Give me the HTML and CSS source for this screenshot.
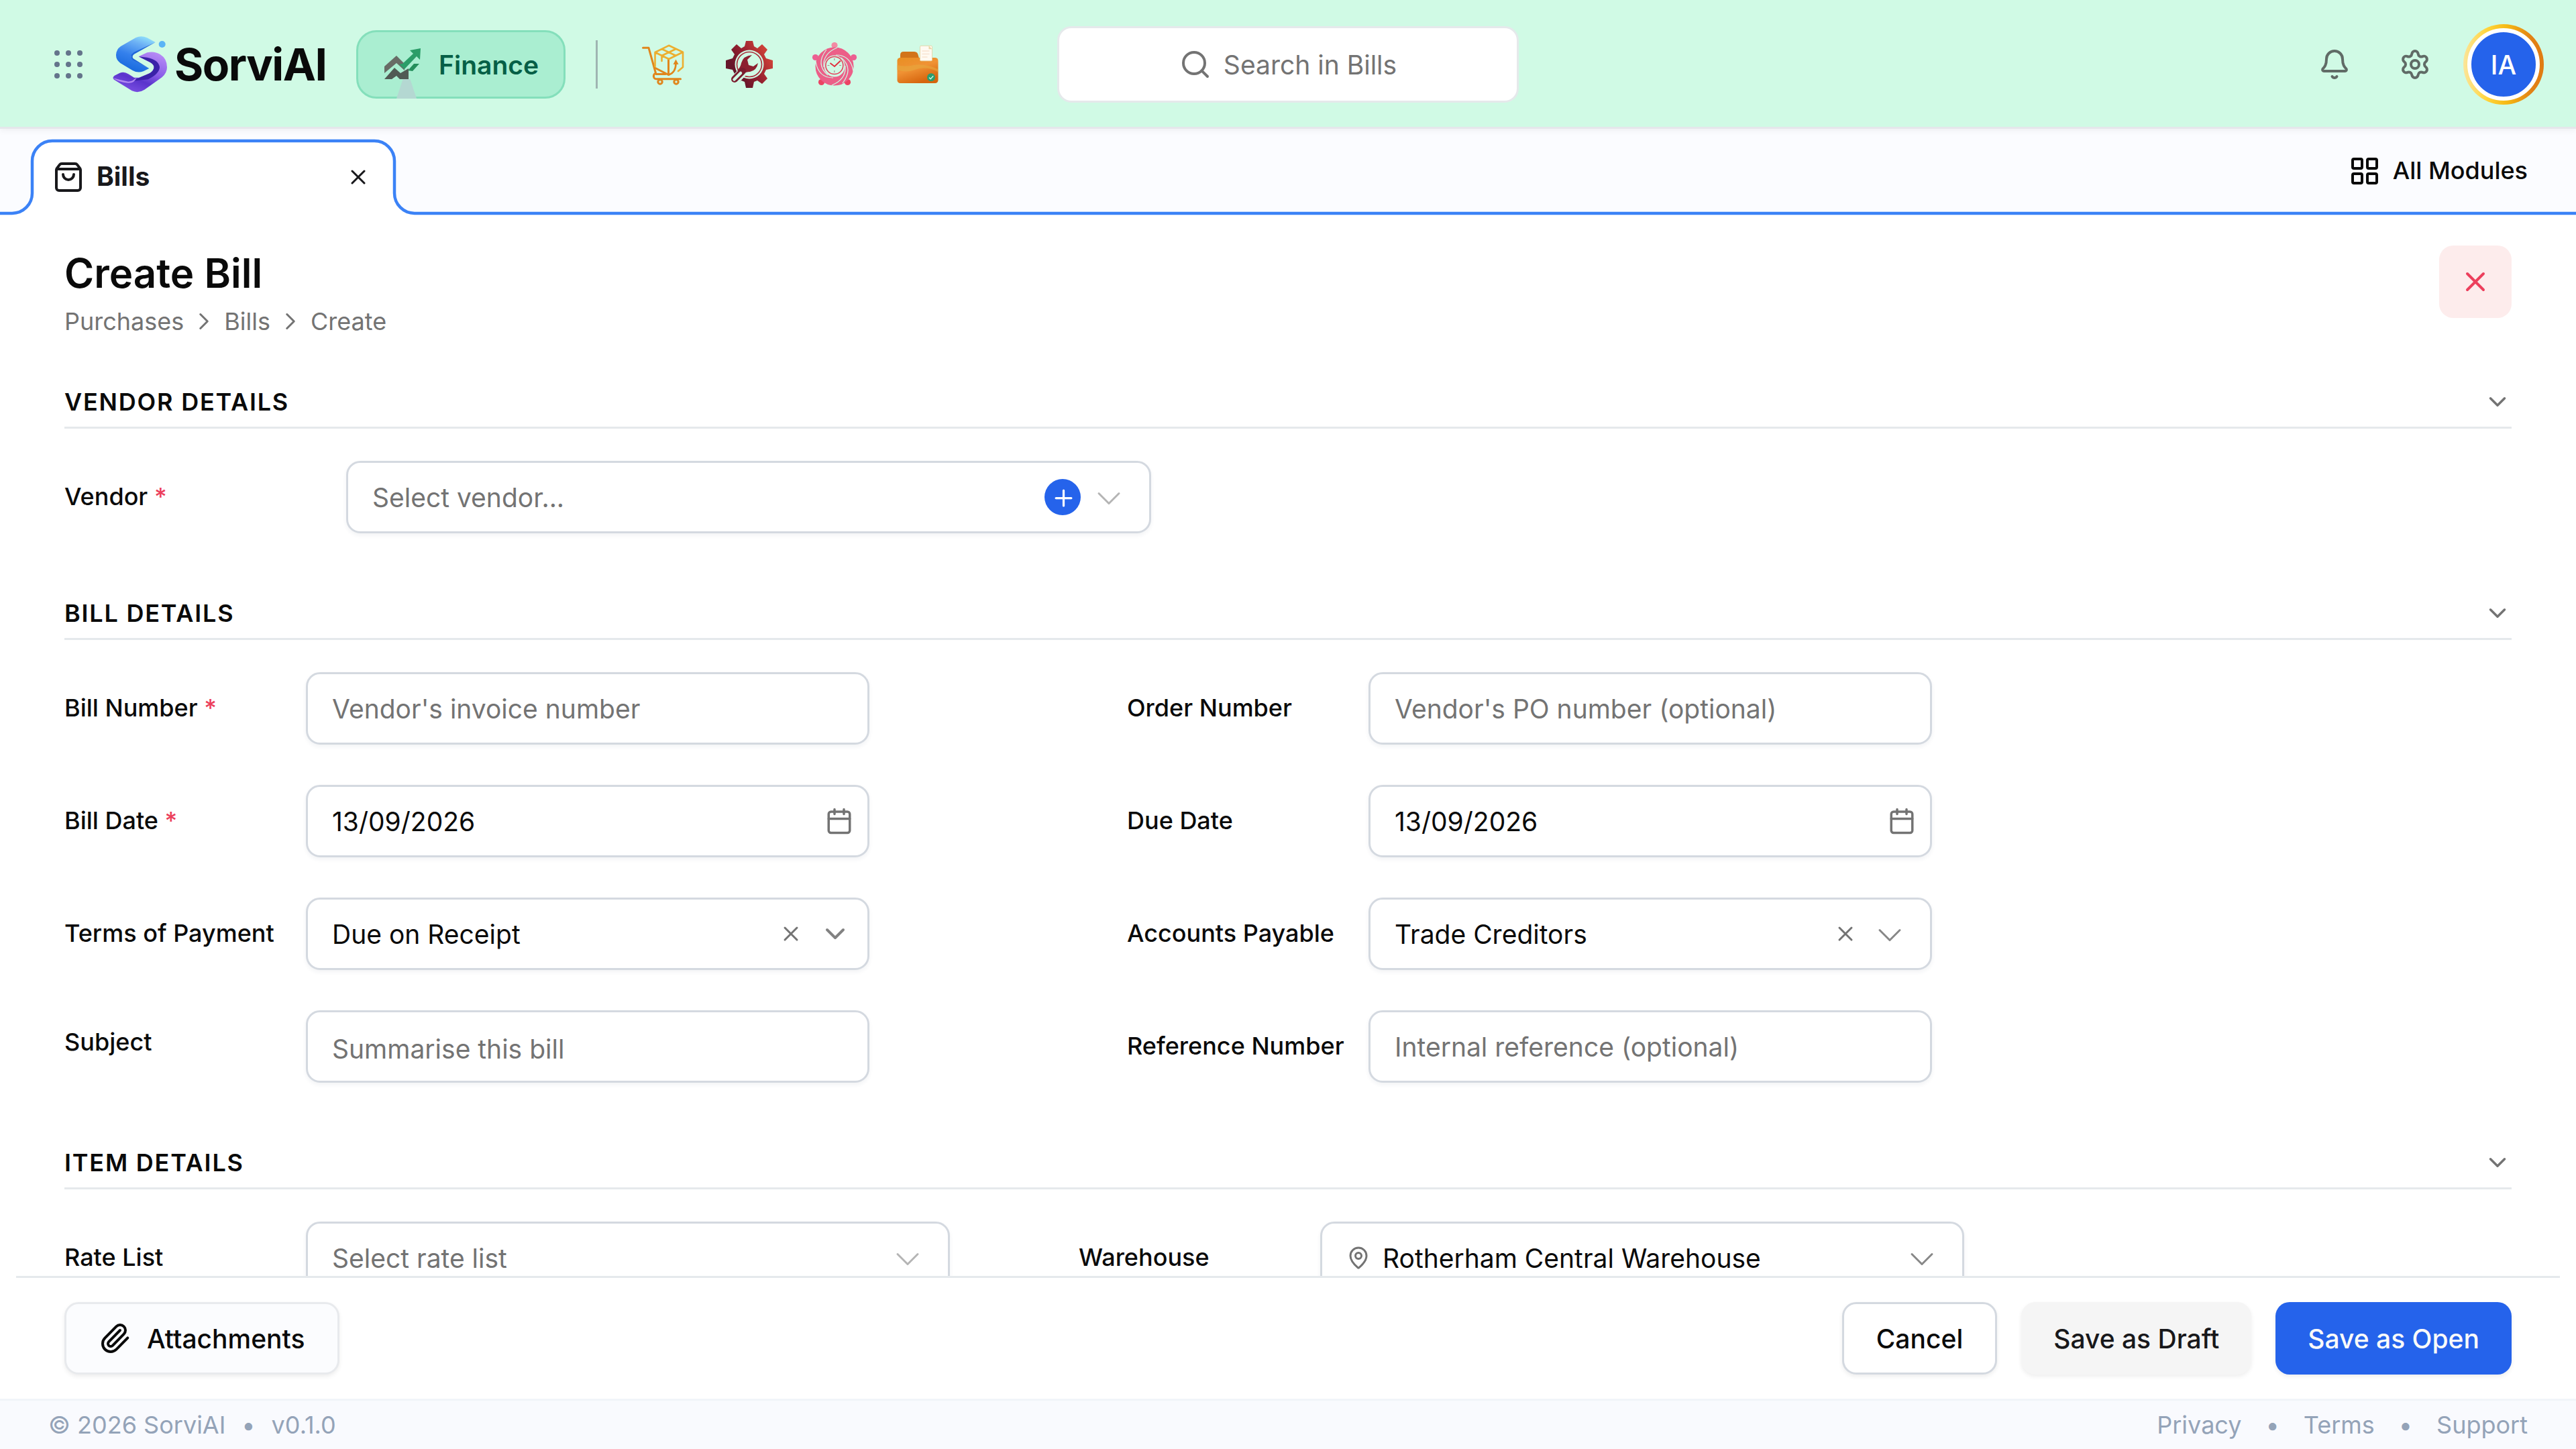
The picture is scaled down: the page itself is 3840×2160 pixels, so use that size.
FILE: index.html
```html
<!DOCTYPE html>
<html lang="en">
<head>
  <meta charset="UTF-8">
  <title>Create Bill - SorviAI</title>
  <meta name="viewport" content="width=device-width, initial-scale=1.0">
  <link rel="stylesheet" href="styles.css">
</head>
<body>
  <!-- shared icons -->
  <svg class="sprite" width="0" height="0">
    <symbol id="i-x" viewBox="0 0 24 24"><path d="M18 6 6 18M6 6l12 12"/></symbol>
    <symbol id="i-down" viewBox="0 0 24 24"><path d="m6 9 6 6 6-6"/></symbol>
    <symbol id="i-right" viewBox="0 0 24 24"><path d="m9 18 6-6-6-6"/></symbol>
    <symbol id="i-calendar" viewBox="0 0 24 24"><path d="M8 2v4M16 2v4M3 10h18"/><rect x="3" y="4" width="18" height="18" rx="2"/></symbol>
  </svg>

  <header class="topbar">
    <svg class="dots" viewBox="0 0 42 42">
      <circle cx="4" cy="4" r="4"/><circle cx="21" cy="4" r="4"/><circle cx="38" cy="4" r="4"/>
      <circle cx="4" cy="21" r="4"/><circle cx="21" cy="21" r="4"/><circle cx="38" cy="21" r="4"/>
      <circle cx="4" cy="38" r="4"/><circle cx="21" cy="38" r="4"/><circle cx="38" cy="38" r="4"/>
    </svg>

    <div class="brand">
      <svg class="brand-mark" viewBox="48 40 252 258">
        <defs>
          <linearGradient id="blue" x1="0.8" y1="0" x2="0.4" y2="1">
            <stop offset="0" stop-color="#93e4fc"/><stop offset="0.25" stop-color="#6cb0f4"/>
            <stop offset="0.6" stop-color="#3480ec"/><stop offset="1" stop-color="#1668dc"/>
          </linearGradient>
          <linearGradient id="purple" x1="0.8" y1="0" x2="0.3" y2="1">
            <stop offset="0" stop-color="#b88cf6"/><stop offset="0.45" stop-color="#8a5ee8"/>
            <stop offset="0.7" stop-color="#5a34cc"/><stop offset="1" stop-color="#7c50e4"/>
          </linearGradient>
        </defs>
        <path fill="url(#blue)" d="M158 49Q182 38 208 50L245 70L150 117Q126 132 146 150L217 187L191 200Q166 209 143 196L88 163Q68 148 69 126Q70 102 90 88Z"/>
        <path fill="#1e64d8" d="M245 70L150 114Q125 130 144 150L217 187L146 143Q138 132 150 123Z"/>
        <path fill="url(#purple)" d="M170 134L208 116Q240 108 266 124Q297 143 297 182Q297 208 274 227L196 282Q168 300 140 287L60 237Q50 228 62 219L86 207Q106 199 124 212L150 228L172 228L212 212Q242 198 238 176Q234 166 222 160Z"/>
        <path fill="#3a22a8" d="M170 134L222 160Q242 172 238 186Q232 204 212 212L172 229L140 244L212 236Q262 212 264 182Q260 148 208 138Z"/>
        <path fill="#b28af2" d="M56 230Q90 240 124 246Q140 246 150 236L160 229Q152 254 122 252Q80 250 56 230Z"/>
        <circle cx="275" cy="79" r="15" fill="#5ab4f6"/>
      </svg>
      <span class="brand-name">SorviAI</span>
    </div>

    <button class="module-btn">
      <svg class="finance-icon" viewBox="0 0 54 48">
        <path fill="#686c66" d="M0 27 18 11 30 23 30 33 18 22 0 37Z"/>
        <path fill="#2b9d68" d="M27 23 43 8 38 3 54 0 53 17 48 12 30 31 22 24Z"/>
        <path fill="#505a54" d="M0 46 15 29 24 37 36 30 36 46 23 46 18 41 11 46Z"/>
        <path fill="#258f5c" d="M35 33 44 23 52 23 42 34Z"/>
      </svg>
      Finance
      <span class="module-beam"></span>
    </button>

    <span class="divider"></span>

    <nav class="apps">
      <!-- purchases -->
      <svg viewBox="71 37 78 78" fill="none" stroke-linecap="round" stroke-linejoin="round">
        <g stroke="#e0861c" stroke-width="3">
          <path d="M78.5 51.3H87L97.5 89Q93 91 95 96Q96 97.7 98 97.7H134.5"/>
          <path d="M97 81.5 116.5 91.5V68M98 90.5H112"/>
          <circle cx="104" cy="102" r="3.2"/><circle cx="128" cy="102" r="3.2"/>
        </g>
        <path stroke="#ecae30" stroke-width="2.6" d="M96.5 58 117 47.8 138 57.7 117 68ZM96.5 58V79M138 57.7V80L131 86M106.5 53 127.5 63M127.5 53 106.5 63V71"/>
        <path stroke="#e0861c" stroke-width="2.6" d="M117 91.5Q127.5 88 127.5 74"/>
        <path fill="#e0861c" d="M123.5 76 127.5 68.5 131.5 76Z"/>
      </svg>

      <!-- services -->
      <svg viewBox="197 37 78 78">
        <defs>
          <linearGradient id="wine" x1="0.1" y1="0.8" x2="0.9" y2="0.3">
            <stop offset="0.2" stop-color="#66162a"/><stop offset="0.55" stop-color="#94202f"/><stop offset="1" stop-color="#cc4038"/>
          </linearGradient>
        </defs>
        <path fill="url(#wine)" d="M232 41H242L244 49 249 52 256 46 264 54 259 61 262 67 272 70V82L262 84 259 90 264 97 256 105 249 100 244 102 242 111H232L230 102 225 100 218 105 210 97 215 90 212 84 202 82V70L212 67 215 61 210 54 218 46 225 52 230 49Z"/>
        <circle cx="237" cy="76" r="21.5" fill="#d0fae5"/>
        <circle cx="237" cy="76" r="18.5" fill="none" stroke="#a82a38" stroke-width="1.6"/>
        <path stroke="#d0fae5" stroke-width="14" stroke-linecap="round" d="M228 86 216 99"/>
        <path fill="#8c2030" d="M241 62Q228 63 225 74Q224 80 219 85L227 91Q231 87 238 87Q248 85 250 74L243 79 236 77 234 69Z"/>
        <path stroke="#7a1c2e" stroke-width="10" stroke-linecap="round" d="M227 86 215 98"/>
        <path stroke="#d0fae5" stroke-width="4.5" stroke-linecap="round" d="M224 89 214.5 98.5"/>
      </svg>

      <!-- time -->
      <svg viewBox="323 37 78 78" fill="none">
        <circle cx="364" cy="47.5" r="4.6" fill="#f28ba4"/>
        <g fill="#ec5f92"><circle cx="335.5" cy="65.5" r="4.6"/><circle cx="392.5" cy="65.5" r="4.6"/></g>
        <g fill="#ec4464"><circle cx="344.5" cy="102.5" r="4.6"/><circle cx="383.5" cy="102.5" r="4.6"/></g>
        <circle cx="364" cy="79" r="22" stroke="#ec5f88" stroke-width="13"/>
        <g stroke="#d0fae5" stroke-width="1.2">
          <path d="M348 80Q346 60 368 51M354 92Q335 76 352 54M362 96Q340 96 336 72"/>
          <path d="M380 78Q382 98 360 107M374 66Q393 82 376 104M366 62Q388 62 392 86"/>
        </g>
        <circle cx="363.8" cy="77.5" r="15" fill="#d0fae5"/>
        <circle cx="363.8" cy="77.5" r="13" stroke="#e4405c" stroke-width="1.6"/>
        <path stroke="#b08a92" stroke-width="1.2" d="M363.8 67v3M363.8 85v3M353.5 77.500h3M371 77.500h3"/>
        <path stroke="#e02e3c" stroke-width="1.9" d="M357.5 74 364 79 373 70.5"/>
      </svg>

      <!-- documents -->
      <svg viewBox="449 37 78 78">
        <defs>
          <linearGradient id="folder" x1="0" y1="0" x2="0.5" y2="1">
            <stop offset="0" stop-color="#e88f22"/><stop offset="0.5" stop-color="#f09234"/><stop offset="1" stop-color="#d6650e"/>
          </linearGradient>
        </defs>
        <path fill="#d2741a" d="M462 70V62Q462 57 467 57H483Q488 57 489 63L491 70Z"/>
        <rect x="457.5" y="66" width="61" height="38" rx="4.5" fill="url(#folder)"/>
        <path fill="#e6a83e" opacity=".6" d="M457.5 77Q470 80 482 77Q498 74 518 83V87Q500 78 484 84Q470 89 457.5 84Z"/>
        <rect x="491.5" y="48.3" width="18" height="22.5" rx="1.5" fill="#fffaf2" stroke="#e4cf9c" stroke-width=".8"/>
        <path fill="#ead6a4" d="M504.5 48.3 509.5 53.3H504.5Z"/>
        <path stroke="#fae8d8" stroke-width="2" d="M494.5 56h11M494.5 60.5h11M494.5 65h8"/>
        <circle cx="508" cy="95.3" r="6" fill="#2c9c6e"/>
        <path fill="none" stroke="#d0fae5" stroke-width="1.3" d="m505 95.5 2.2 2.2 4-4.5"/>
      </svg>
    </nav>

    <div class="search">
      <svg class="icon" viewBox="0 0 24 24"><path d="m21 21-4.34-4.34"/><circle cx="11" cy="11" r="8"/></svg>
      <span>Search in Bills</span>
    </div>

    <div class="user-area">
      <svg class="icon" viewBox="0 0 24 24"><path d="M10.268 21a2 2 0 0 0 3.464 0M3.262 15.326A1 1 0 0 0 4 17h16a1 1 0 0 0 .74-1.673C19.41 13.956 18 12.499 18 8A6 6 0 0 0 6 8c0 4.499-1.411 5.956-2.738 7.326"/></svg>
      <svg class="icon" viewBox="0 0 24 24"><path d="M9.671 4.136a2.34 2.34 0 0 1 4.659 0 2.34 2.34 0 0 0 3.319 1.915 2.34 2.34 0 0 1 2.33 4.033 2.34 2.34 0 0 0 0 3.831 2.34 2.34 0 0 1-2.33 4.033 2.34 2.34 0 0 0-3.319 1.915 2.34 2.34 0 0 1-4.659 0 2.34 2.34 0 0 0-3.32-1.915 2.34 2.34 0 0 1-2.33-4.033 2.34 2.34 0 0 0 0-3.831A2.34 2.34 0 0 1 6.35 6.051a2.34 2.34 0 0 0 3.319-1.915"/><circle cx="12" cy="12" r="3"/></svg>
      <div class="avatar"><span>IA</span></div>
    </div>
  </header>

  <div class="tabbar">
    <svg class="tab-outline" viewBox="0 0 3840 129">
      <path d="M-6 126H18A30 30 0 0 0 48 96V48A30 30 0 0 1 78 18H558A30 30 0 0 1 588 48V96A30 30 0 0 0 618 126H3846V140H-6Z"/>
    </svg>
    <div class="tab">
      <svg class="icon" viewBox="0 0 24 24"><path d="M16 10a4 4 0 0 1-8 0M3.103 6.034h17.794M3.4 5.467a2 2 0 0 0-.4 1.2V20a2 2 0 0 0 2 2h14a2 2 0 0 0 2-2V6.667a2 2 0 0 0-.4-1.2l-2-2.667A2 2 0 0 0 17 2H7a2 2 0 0 0-1.6.8z"/></svg>
      <span class="tab-label">Bills</span>
      <svg class="icon sm"><use href="#i-x"/></svg>
    </div>
    <div class="all-modules">
      <svg class="icon" viewBox="0 0 24 24"><rect x="3" y="3" width="7" height="7" rx="1"/><rect x="14" y="3" width="7" height="7" rx="1"/><rect x="14" y="14" width="7" height="7" rx="1"/><rect x="3" y="14" width="7" height="7" rx="1"/></svg>
      <span>All Modules</span>
    </div>
  </div>

  <main>
    <div class="page-head">
      <div>
        <h1>Create Bill</h1>
        <div class="breadcrumb">
          <span>Purchases</span>
          <svg class="icon md"><use href="#i-right"/></svg>
          <span>Bills</span>
          <svg class="icon md"><use href="#i-right"/></svg>
          <span>Create</span>
        </div>
      </div>
      <button class="close-btn"><svg class="icon"><use href="#i-x"/></svg></button>
    </div>

    <section>
      <div class="section-head"><h2>Vendor Details</h2><svg class="icon md"><use href="#i-down"/></svg></div>
      <div class="field vendor">
        <label>Vendor <em>*</em></label>
        <div class="control placeholder">
          <span>Select vendor...</span>
          <i class="add"><svg class="icon" viewBox="0 0 24 24"><path d="M5 12h14M12 5v14"/></svg></i>
          <svg class="icon thin faded"><use href="#i-down"/></svg>
        </div>
      </div>
    </section>

    <section>
      <div class="section-head"><h2>Bill Details</h2><svg class="icon md"><use href="#i-down"/></svg></div>
      <div class="grid">
        <div class="field">
          <label>Bill Number <em>*</em></label>
          <div class="control placeholder"><span>Vendor's invoice number</span></div>
        </div>
        <div class="field">
          <label>Order Number</label>
          <div class="control placeholder"><span>Vendor's PO number (optional)</span></div>
        </div>
        <div class="field">
          <label>Bill Date <em>*</em></label>
          <div class="control date"><span>13/09/2026</span><svg class="icon md"><use href="#i-calendar"/></svg></div>
        </div>
        <div class="field">
          <label>Due Date</label>
          <div class="control date"><span>13/09/2026</span><svg class="icon md"><use href="#i-calendar"/></svg></div>
        </div>
        <div class="field">
          <label>Terms of Payment</label>
          <div class="control terms">
            <span>Due on Receipt</span>
            <svg class="icon sm"><use href="#i-x"/></svg>
            <svg class="icon chev"><use href="#i-down"/></svg>
          </div>
        </div>
        <div class="field">
          <label>Accounts Payable</label>
          <div class="control">
            <span>Trade Creditors</span>
            <svg class="icon sm"><use href="#i-x"/></svg>
            <svg class="icon thin"><use href="#i-down"/></svg>
          </div>
        </div>
        <div class="field subject">
          <label>Subject</label>
          <div class="control placeholder"><span>Summarise this bill</span></div>
        </div>
        <div class="field">
          <label>Reference Number</label>
          <div class="control placeholder"><span>Internal reference (optional)</span></div>
        </div>
      </div>
    </section>

    <section>
      <div class="section-head"><h2>Item Details</h2><svg class="icon md"><use href="#i-down"/></svg></div>
      <div class="grid wide">
        <div class="field">
          <label>Rate List</label>
          <div class="control placeholder"><span>Select rate list</span><svg class="icon thin faded"><use href="#i-down"/></svg></div>
        </div>
        <div class="field">
          <label>Warehouse</label>
          <div class="control">
            <svg class="icon sm pin" viewBox="0 0 24 24"><path d="M20 10c0 4.993-5.539 10.193-7.399 11.799a1 1 0 0 1-1.202 0C9.539 20.193 4 14.993 4 10a8 8 0 0 1 16 0"/><circle cx="12" cy="10" r="3"/></svg>
            <span>Rotherham Central Warehouse</span>
            <svg class="icon thin"><use href="#i-down"/></svg>
          </div>
        </div>
      </div>
    </section>
  </main>

  <div class="actions">
    <button class="btn attach">
      <svg class="icon" viewBox="0 0 24 24"><path d="m16 6-8.414 8.586a2 2 0 0 0 2.829 2.829l8.414-8.586a4 4 0 1 0-5.657-5.657l-8.379 8.551a6 6 0 1 0 8.485 8.485l8.379-8.551"/></svg>
      Attachments
    </button>
    <button class="btn outline">Cancel</button>
    <button class="btn draft">Save as Draft</button>
    <button class="btn primary">Save as Open</button>
  </div>

  <footer>
    <div class="copyright"><span>&copy; 2026 SorviAI</span><span>&bull;</span><span>v0.1.0</span></div>
    <div class="links"><span>Privacy</span><span>&bull;</span><span>Terms</span><span>&bull;</span><span>Support</span></div>
  </footer>
</body>
</html>
```
FILE: styles.css
```css
* {
  box-sizing: border-box;
}
body {
  margin: 0;
  height: 2160px;
  display: flex;
  flex-direction: column;
  overflow: hidden;
  font-family: Inter, "Liberation Sans", sans-serif;
  font-size: 39px;
  color: #0a0a0a;
  background: #fff;
}
h1, h2 {
  margin: 0;
  font-weight: 600;
}
button {
  font: inherit;
  color: inherit;
  border: none;
  padding: 0;
}
.sprite {
  position: absolute;
}
.icon {
  width: 48px;
  height: 48px;
  flex-shrink: 0;
  fill: none;
  stroke: currentColor;
  stroke-width: 2;
  stroke-linecap: round;
  stroke-linejoin: round;
}
.icon.md {
  width: 42px;
  height: 42px;
}
.icon.sm {
  width: 36px;
  height: 36px;
}
.icon.thin {
  width: 60px;
  height: 60px;
  margin-top: 3px;
  stroke-width: 1.2;
}

/* top bar */
.topbar {
  position: relative;
  z-index: 1;
  flex: none;
  display: flex;
  align-items: center;
  height: 192px;
  padding: 0 48px 0 81px;
  background: #d0fae5;
  border-bottom: 3px solid #e5e7eb;
  box-shadow: 0 3px 9px rgba(0, 0, 0, 0.05);
}
.dots {
  width: 42px;
  height: 42px;
  margin-top: 3px;
  fill: #64748b;
}
.brand {
  display: flex;
  align-items: center;
  width: 365px;
  margin-left: 43px;
  padding-top: 3px;
}
.brand-mark {
  width: 84px;
  height: 86px;
}
.brand-name {
  margin-left: 10px;
  font-size: 66px;
  line-height: 72px;
  font-weight: 700;
  letter-spacing: -0.022em;
}
.module-btn {
  position: relative;
  display: flex;
  align-items: center;
  gap: 27px;
  width: 312px;
  height: 102px;
  margin-top: 3px;
  padding-left: 39px;
  border: 3px solid #84dfbb;
  border-radius: 30px;
  background: #aaeed1;
  color: #065f46;
  font-weight: 600;
}
.finance-icon {
  width: 54px;
  height: 48px;
}
.module-beam {
  position: absolute;
  left: 57px;
  bottom: -3px;
  width: 30px;
  height: 29px;
  background: #b4d8d2;
  clip-path: polygon(32% 0, 68% 0, 100% 100%, 0 100%);
}
.divider {
  width: 3px;
  height: 72px;
  margin: 3px 0 0 45px;
  background: #9fb5b2;
}
.apps {
  display: flex;
  gap: 48px;
  margin: 3px 0 0 60px;
}
.apps svg {
  width: 78px;
  height: 78px;
}
.search {
  display: flex;
  align-items: center;
  justify-content: center;
  gap: 18px;
  width: 688px;
  height: 114px;
  margin: 3px 0 0 169px;
  border: 3px solid #e5e9eb;
  border-radius: 21px;
  background: #fff;
  color: #737373;
}
.user-area {
  display: flex;
  align-items: center;
  gap: 72px;
  margin: 3px 0 0 auto;
  color: #606b66;
}
.avatar {
  width: 120px;
  height: 120px;
  margin-left: -24px;
  padding: 6px;
  border-radius: 50%;
  background: linear-gradient(to right, #fbe59a, #ffd43b 30%, #f5b814 55%, #e28114 85%, #e07b12);
}
.avatar span {
  display: flex;
  align-items: center;
  justify-content: center;
  height: 108px;
  border: 6px solid #fff;
  border-radius: 50%;
  background: #2563eb;
  color: #fff;
  font-weight: 500;
}

/* tabs */
.tabbar {
  position: relative;
  flex: none;
  display: flex;
  justify-content: space-between;
  height: 129px;
  padding-right: 72px;
  background: #fbfcff;
}
.tab-outline {
  position: absolute;
  left: 0;
  top: 0;
  width: 3840px;
  height: 129px;
  fill: #fff;
  stroke: #3b82f6;
  stroke-width: 4.5;
}
.tab {
  position: relative;
  display: flex;
  align-items: center;
  width: 474px;
  height: 108px;
  margin: 18px 0 0 78px;
  color: #18181b;
}
.tab-label {
  flex: 1;
  margin-left: 18px;
  padding-bottom: 4px;
  font-weight: 700;
}
.all-modules {
  position: relative;
  display: flex;
  align-items: center;
  gap: 18px;
  height: 126px;
  font-size: 36px;
  font-weight: 500;
}
.all-modules span {
  padding-bottom: 2px;
}

/* form */
main {
  flex: 1;
  min-height: 0;
  overflow: hidden;
  padding: 45px 96px 0;
}
.page-head {
  display: flex;
  justify-content: space-between;
  height: 195px;
}
h1 {
  padding-top: 5px;
  font-size: 60px;
  line-height: 72px;
}
.breadcrumb {
  display: flex;
  align-items: center;
  gap: 9px;
  margin-top: 9px;
  font-size: 36px;
  line-height: 54px;
  color: #737373;
}
.breadcrumb .icon {
  stroke-width: 1.75;
}
.close-btn {
  display: flex;
  align-items: center;
  justify-content: center;
  width: 108px;
  height: 108px;
  border-radius: 21px;
  background: #fdecec;
  color: #ec3f5c;
}
section {
  margin-bottom: 81px;
}
.section-head {
  display: flex;
  align-items: center;
  justify-content: space-between;
  height: 78px;
  margin-bottom: 48px;
  padding-top: 1px;
  border-bottom: 3px solid #e5e9ec;
  color: #737373;
}
h2 {
  font-size: 36px;
  letter-spacing: 0.05em;
  text-transform: uppercase;
  color: #0a0a0a;
}
.grid {
  display: grid;
  grid-template-columns: 1200px 1200px;
  gap: 60px 384px;
}
.grid.wide {
  grid-template-columns: 1320px 1320px;
  column-gap: 192px;
}
.field {
  display: flex;
  align-items: center;
}
.field label {
  width: 360px;
  padding-bottom: 3px;
  font-size: 36px;
  font-weight: 500;
}
.field em {
  font-style: normal;
  color: #ec3f5c;
}
.field.vendor {
  width: 1620px;
}
.field.vendor label {
  width: 420px;
}
.control {
  flex: 1;
  display: flex;
  align-items: center;
  height: 108px;
  padding: 0 30px 0 36px;
  border: 3px solid #d4d9e0;
  border-radius: 21px;
  background: #fff;
  box-shadow: 0 3px 6px rgba(30, 50, 80, 0.06);
}
.control span {
  flex: 1;
}
.control .icon {
  color: #737373;
}
.control .thin {
  margin-left: 18px;
  color: #888;
}
.control .faded {
  color: #b5b5b5;
}
.placeholder span {
  color: #737373;
}
.date {
  padding-right: 21px;
}
.terms {
  padding-right: 24px;
}
.terms .chev {
  margin-left: 24px;
  color: #828282;
}
.control .pin {
  margin-right: 18px;
}
.add {
  display: flex;
  align-items: center;
  justify-content: center;
  width: 54px;
  height: 54px;
  margin-right: -6px;
  padding: 3px 0 0 3px;
  border-radius: 50%;
  background: #2563eb;
}
.add .icon {
  width: 39px;
  height: 39px;
  stroke: #fff;
}
.subject label {
  padding-bottom: 14px;
}
.subject .control {
  padding-top: 6px;
}

/* bottom actions */
.actions {
  flex: none;
  display: flex;
  align-items: flex-start;
  gap: 36px;
  height: 183px;
  margin: 0 24px;
  padding: 36px 72px 0;
  border-top: 3px solid #e5e9ec;
}
.btn {
  display: flex;
  align-items: center;
  height: 108px;
  padding: 0 48px;
  border-radius: 21px;
  font-weight: 500;
  box-shadow: 0 3px 6px rgba(0, 0, 0, 0.07);
}
.attach {
  gap: 24px;
  margin-right: auto;
  border: 3px solid #e8eaed;
  background: #fbfcfe;
}
.outline {
  border: 3px solid #d4d9e0;
  background: #fff;
}
.draft {
  background: #f5f5f5;
  color: #18181b;
}
.primary {
  background: #2563eb;
  color: #fafafa;
}

footer {
  flex: none;
  display: flex;
  align-items: center;
  justify-content: space-between;
  height: 75px;
  padding: 0 72px 1px;
  border-top: 3px solid #f1f5f9;
  background: #f9fafe;
  color: #94a3b8;
  font-size: 36px;
}
.copyright,
.links {
  display: flex;
  gap: 24px;
}
.links {
  gap: 36px;
}
```
